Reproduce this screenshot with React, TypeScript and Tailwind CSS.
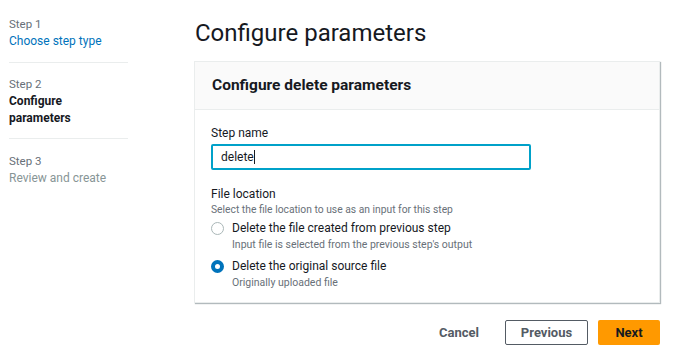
import React, { useState } from 'react';

const font = { fontFamily: 'Roboto, "Liberation Sans", Arial, sans-serif' };

function Sidebar() {
  return (
    <nav className="w-[119px] ml-[9px] shrink-0 pt-[16px]">
      <div className="text-[11.5px] leading-[17px] text-[#687078]">Step 1</div>
      <div className="text-[12px] leading-[17px] text-[#0073bb]">Choose step type</div>
      <div className="h-px bg-[#eaeded] mt-[12px] mb-[13px]" />
      <div className="text-[11.5px] leading-[17px] text-[#687078]">Step 2</div>
      <div className="text-[12px] leading-[17px] font-bold text-[#16191f]">
        Configure
        <br />
        parameters
      </div>
      <div className="h-px bg-[#eaeded] mt-[11px] mb-[14px]" />
      <div className="text-[11.5px] leading-[17px] text-[#687078]">Step 3</div>
      <div className="text-[12px] leading-[17px] text-[#879596]">Review and create</div>
    </nav>
  );
}

interface RadioProps {
  checked: boolean;
  label: string;
  hint: string;
  onSelect: () => void;
}

function Radio({ checked, label, hint, onSelect }: RadioProps) {
  return (
    <label className="flex items-start gap-[8px] cursor-pointer" onClick={onSelect}>
      <span
        className={
          checked
            ? 'mt-[2px] w-[13px] h-[13px] rounded-full border-[4px] border-[#0073bb] bg-white shrink-0'
            : 'mt-[2px] w-[13px] h-[13px] rounded-full border border-[#aab7b8] bg-white shrink-0'
        }
      />
      <span className="flex flex-col">
        <span className="text-[12px] leading-[17px] text-[#16191f]">{label}</span>
        <span className="text-[10.5px] leading-[15px] text-[#687078]">{hint}</span>
      </span>
    </label>
  );
}

export default function App() {
  const [source, setSource] = useState('original');

  return (
    <div className="w-[673px] h-[355px] bg-white flex overflow-hidden" style={font}>
      <Sidebar />
      <main className="ml-[66px] w-[466px] pt-[18px]">
        <h1 className="text-[24px] leading-[30px] text-[#16191f] ml-[1px]">Configure parameters</h1>
        <section className="mt-[13px] border border-[#eaeded] shadow-[1px_1px_1px_rgba(0,28,36,0.3)] bg-white">
          <header className="h-[48px] bg-[#fafafa] border-b border-[#eaeded] px-[17px] flex items-center">
            <h2 className="text-[15.5px] font-bold text-[#16191f]">Configure delete parameters</h2>
          </header>
          <div className="px-[16px] pt-[15px] pb-[12px]">
            <div className="text-[12px] leading-[17px] text-[#16191f]">Step name</div>
            <div className="mt-[2px] w-[320px] h-[26px] border-2 border-[#00a1c9] rounded-[2px] flex items-center px-[8px]">
              <span className="text-[12px] text-[#16191f]">delete</span>
              <span className="w-px h-[14px] bg-[#16191f]" />
            </div>
            <div className="mt-[17px] text-[12px] leading-[15px] text-[#16191f]">File location</div>
            <div className="text-[10.3px] leading-[15px] text-[#687078]">
              Select the file location to use as an input for this step
            </div>
            <div className="mt-[3px] flex flex-col gap-[6px]">
              <Radio
                checked={source === 'previous'}
                label="Delete the file created from previous step"
                hint="Input file is selected from the previous step's output"
                onSelect={() => setSource('previous')}
              />
              <Radio
                checked={source === 'original'}
                label="Delete the original source file"
                hint="Originally uploaded file"
                onSelect={() => setSource('original')}
              />
            </div>
          </div>
        </section>
        <div className="mt-[17px] flex justify-end items-center gap-[10px]">
          <button className="h-[25px] px-[16px] text-[13px] font-bold text-[#545b64]">Cancel</button>
          <button className="h-[25px] w-[83px] border border-[#545b64] rounded-[2px] text-[13px] font-bold text-[#545b64] bg-white">
            Previous
          </button>
          <button className="h-[25px] w-[62px] rounded-[2px] text-[13px] font-bold text-[#16191f] bg-[#ff9900]">
            Next
          </button>
        </div>
      </main>
    </div>
  );
}
